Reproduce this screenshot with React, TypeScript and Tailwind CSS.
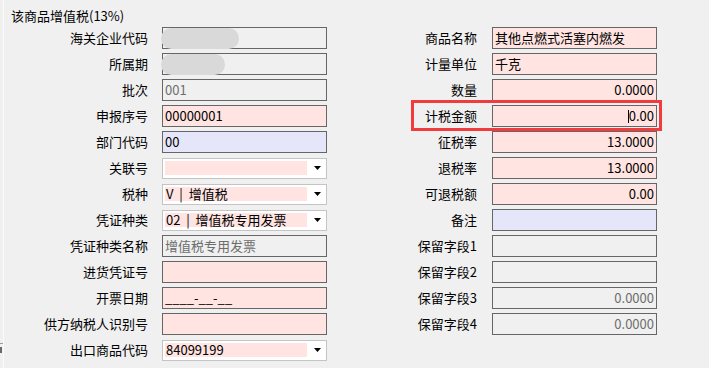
import React from 'react';

const font = "font-['Noto_Sans_CJK_SC','Noto_Sans_CJK_JP',sans-serif]";

type BoxProps = {
    text?: string;
    tone?: 'pink' | 'blue' | 'gray';
    muted?: boolean;
    right?: boolean;
    cursor?: boolean;
    blob?: string;
};

const toneClass = {
    pink: 'bg-[#ffe4e1]',
    blue: 'bg-[#e6e6fa]',
    gray: 'bg-[#f0f0f0]',
};

// plain edit box
const Box = ({ text = '', tone = 'pink', muted = false, right = false, cursor = false, blob }: BoxProps) => (
    <div
        className={`relative w-[165px] h-[22px] border border-[#666666] ${toneClass[tone]} flex items-start pt-[1px] px-[2px] ${right ? 'justify-end' : 'justify-start'}`}
    >
        {blob && <div className={`absolute top-0 -left-[2px] h-[21px] rounded-full bg-[#d9d9d9] ${blob}`} />}
        <span className={`whitespace-pre text-[13px] leading-[17px] ${muted ? 'text-[#6d6d6d]' : 'text-black'}`}>
            {cursor && <span className="inline-block w-px h-[13px] bg-black align-[-2px]" />}
            {text}
        </span>
    </div>
);

// drop-down box
const Combo = ({ text = '' }: { text?: string }) => (
    <div className="w-[165px] h-[21px] bg-white border border-[#c4c4c4] flex items-center pl-[2px] pr-[3px] justify-between">
        <div className="w-[142px] h-[14px] bg-[#ffe4e1] flex items-center px-[1px]">
            <span className="whitespace-pre text-[13px] leading-[14px] text-black">{text}</span>
        </div>
        <svg width="8" height="4" viewBox="0 0 8 4" className="mr-[1px]">
            <path d="M0 0H7L3.5 4Z" fill="#000" />
        </svg>
    </div>
);

const Row = ({ label, labelW, gap, children }: { label: string; labelW: string; gap: string; children: React.ReactNode }) => (
    <div className="flex items-center h-[22px]">
        <div className={`${labelW} ${gap} text-right text-[13px] leading-[16px] text-black whitespace-nowrap`}>{label}</div>
        {children}
    </div>
);

export default function App() {
    const L = 'w-[144px]';
    const LG = 'mr-[14px]';
    const R = 'w-[150px]';
    const RG = 'mr-[15px]';

    return (
        <div className={`relative w-[709px] h-[368px] bg-[#f0f0f0] flex overflow-hidden ${font}`}>
            <div className="w-[3px] shrink-0" />
            <div className="w-px shrink-0 bg-[#fbfbfb]" />

            <div className="flex flex-col">
                <div className="pl-[7px] pt-[8px] text-[13px] leading-[16px] text-black">该商品增值税(13%)</div>

                <div className="flex mt-[3px]">
                    <div className="w-[323px] flex flex-col gap-[4px]">
                        <Row label="海关企业代码" labelW={L} gap={LG}><Box tone="gray" blob="w-[78px]" /></Row>
                        <Row label="所属期" labelW={L} gap={LG}><Box tone="gray" blob="w-[64px]" /></Row>
                        <Row label="批次" labelW={L} gap={LG}><Box tone="gray" muted text="001" /></Row>
                        <Row label="申报序号" labelW={L} gap={LG}><Box text="00000001" /></Row>
                        <Row label="部门代码" labelW={L} gap={LG}><Box tone="blue" text="00" /></Row>
                        <Row label="关联号" labelW={L} gap={LG}><Combo /></Row>
                        <Row label="税种" labelW={L} gap={LG}><Combo text="V  |  增值税" /></Row>
                        <Row label="凭证种类" labelW={L} gap={LG}><Combo text="02  |  增值税专用发票" /></Row>
                        <Row label="凭证种类名称" labelW={L} gap={LG}><Box tone="gray" muted text="增值税专用发票" /></Row>
                        <Row label="进货凭证号" labelW={L} gap={LG}><Box /></Row>
                        <Row label="开票日期" labelW={L} gap={LG}><Box text="____-__-__" /></Row>
                        <Row label="供方纳税人识别号" labelW={L} gap={LG}><Box /></Row>
                        <Row label="出口商品代码" labelW={L} gap={LG}><Combo text="84099199" /></Row>
                    </div>

                    <div className="flex flex-col gap-[4px]">
                        <Row label="商品名称" labelW={R} gap={RG}><Box text="其他点燃式活塞内燃发" /></Row>
                        <Row label="计量单位" labelW={R} gap={RG}><Box text="千克" /></Row>
                        <Row label="数量" labelW={R} gap={RG}><Box right text="0.0000" /></Row>
                        <div className="relative">
                            <Row label="计税金额" labelW={R} gap={RG}><Box right cursor text="0.00" /></Row>
                            <div className="absolute -top-[5px] left-[84px] w-[251px] h-[31px] border-[3px] border-[#f03c3c]" />
                        </div>
                        <Row label="征税率" labelW={R} gap={RG}><Box right text="13.0000" /></Row>
                        <Row label="退税率" labelW={R} gap={RG}><Box right text="13.0000" /></Row>
                        <Row label="可退税额" labelW={R} gap={RG}><Box right text="0.00" /></Row>
                        <Row label="备注" labelW={R} gap={RG}><Box tone="blue" /></Row>
                        <Row label="保留字段1" labelW={R} gap={RG}><Box tone="gray" /></Row>
                        <Row label="保留字段2" labelW={R} gap={RG}><Box tone="gray" /></Row>
                        <Row label="保留字段3" labelW={R} gap={RG}><Box tone="gray" right muted text="0.0000" /></Row>
                        <Row label="保留字段4" labelW={R} gap={RG}><Box tone="gray" right muted text="0.0000" /></Row>
                    </div>
                </div>
            </div>

            {/* bits of the neighbouring pane at the left edge */}
            <div className="absolute left-0 top-[343px] w-[3px] h-px bg-[#9a9a9a]" />
            <div className="absolute left-0 top-[347px] w-[2px] h-[6px] bg-[#6a6a6a]" />
        </div>
    );
}
